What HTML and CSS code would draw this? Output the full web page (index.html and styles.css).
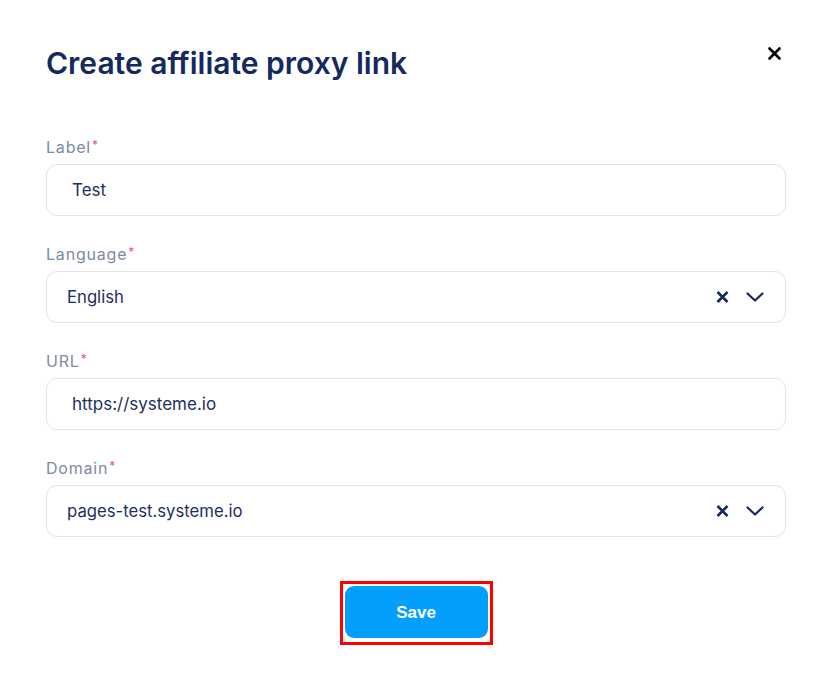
FILE: index.html
```html
<!DOCTYPE html>
<html>
<head>
<meta charset="utf-8">
<link rel="stylesheet" href="styles.css">
</head>
<body>
<div class="modal">
  <div class="header">
    <h1 class="title">Create affiliate proxy link</h1>
    <button class="close" aria-label="Close">
      <svg width="13" height="13" viewBox="0 0 13 13"><path d="M1.5 1.5 L11.5 11.5 M11.5 1.5 L1.5 11.5" stroke="#000" stroke-width="2.6" stroke-linecap="round" fill="none"/></svg>
    </button>
  </div>
  <form class="form">
    <div class="field">
      <label class="label">Label<span class="req">*</span></label>
      <div class="input text-input">Test</div>
    </div>
    <div class="field">
      <label class="label">Language<span class="req">*</span></label>
      <div class="input select">
        <span class="value">English</span>
        <span class="icons">
          <svg width="13" height="12" viewBox="0 0 13 12"><path d="M1.5 1 L11.5 11 M11.5 1 L1.5 11" stroke="#142a5e" stroke-width="2.6" fill="none"/></svg>
          <svg width="18" height="10" viewBox="0 0 18 10"><path d="M1.5 1.5 L9 8.5 L16.5 1.5" stroke="#142a5e" stroke-width="2.2" fill="none" stroke-linecap="round" stroke-linejoin="round"/></svg>
        </span>
      </div>
    </div>
    <div class="field">
      <label class="label">URL<span class="req">*</span></label>
      <div class="input text-input">https://systeme.io</div>
    </div>
    <div class="field">
      <label class="label">Domain<span class="req">*</span></label>
      <div class="input select">
        <span class="value">pages-test.systeme.io</span>
        <span class="icons">
          <svg width="13" height="12" viewBox="0 0 13 12"><path d="M1.5 1 L11.5 11 M11.5 1 L1.5 11" stroke="#142a5e" stroke-width="2.6" fill="none"/></svg>
          <svg width="18" height="10" viewBox="0 0 18 10"><path d="M1.5 1.5 L9 8.5 L16.5 1.5" stroke="#142a5e" stroke-width="2.2" fill="none" stroke-linecap="round" stroke-linejoin="round"/></svg>
        </span>
      </div>
    </div>
    <div class="actions">
      <div class="highlight">
        <button type="button" class="save">Save</button>
      </div>
    </div>
  </form>
</div>
</body>
</html>
```

FILE: styles.css
```css
* { box-sizing: border-box; }
html, body { margin: 0; padding: 0; background: #fff; }
body { font-family: "Inter", "Lato", sans-serif; }

.modal {
  width: 832px;
  padding: 45px 46px 0 46px;
}

.header {
  display: flex;
  justify-content: space-between;
  align-items: flex-start;
}

.title {
  margin: 0;
  font-family: "Inter", sans-serif;
  font-weight: 600;
  font-size: 30px;
  line-height: 36px;
  color: #142a5e;
  letter-spacing: 0;
}

.close {
  margin: 2px 5px 0 0;
  padding: 0;
  border: 0;
  background: none;
  width: 13px;
  height: 13px;
  display: flex;
}

.form {
  display: flex;
  flex-direction: column;
  gap: 28px;
  margin-top: 56px;
}

.field {
  display: flex;
  flex-direction: column;
  gap: 7px;
}

.label {
  height: 20px;
  font-size: 16px;
  line-height: 20px;
  color: #7d8aa3;
  letter-spacing: 0.8px;
}

.req {
  color: #f2507a;
  font-size: 12px;
  line-height: 0;
  margin-left: 1px;
  vertical-align: 4px;
}

.input {
  height: 52px;
  border: 1px solid #e0e4ea;
  border-radius: 11px;
  display: flex;
  align-items: center;
  font-size: 17px;
  color: #1c2f5e;
}

.text-input { padding-left: 25px; }

.select {
  padding: 0 21px 0 20px;
  justify-content: space-between;
  font-size: 16.7px;
}

.icons {
  display: flex;
  align-items: center;
  gap: 17px;
}

.actions {
  display: flex;
  justify-content: center;
  margin-top: 16px;
}

.highlight {
  border: 3px solid #ff0000;
  padding: 2px 2px 4px 2px;
}

.save {
  display: block;
  width: 143px;
  height: 52px;
  padding-top: 3px;
  border: 0;
  border-radius: 9px;
  background: #049ffd;
  color: #fff;
  font-family: "Liberation Sans", Arial, sans-serif;
  font-weight: 700;
  font-size: 17px;
}
```
